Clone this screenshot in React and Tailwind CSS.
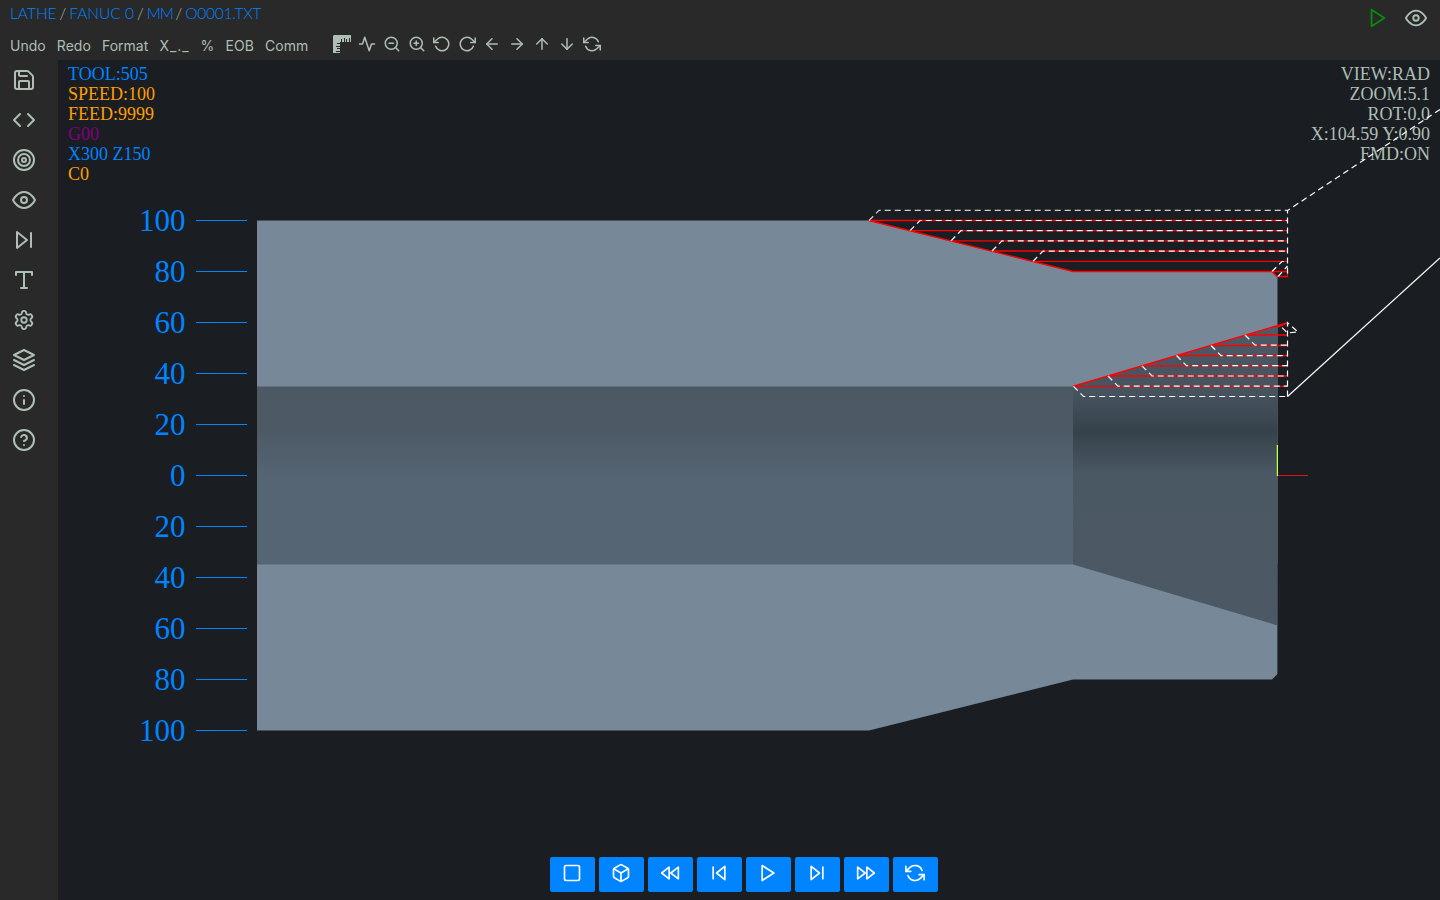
import { FiCode, FiTarget, FiEye, FiSkipForward, FiType, FiLayers, FiInfo, FiHelpCircle, FiActivity, FiZoomOut, FiZoomIn, FiRotateCcw, FiRotateCw, FiArrowLeft, FiArrowRight, FiArrowUp, FiArrowDown, FiRefreshCcw, FiPlay, FiSquare, FiBox, FiRewind, FiSkipBack, FiFastForward } from "react-icons/fi";
import { Save, Settings } from "lucide-react";

function Ruler() {
  return (
    <svg width="18" height="18" viewBox="0 0 18 18" fill="currentColor">
      <path d="M1 0H18V7H17V3H16V7H14V4H13V7H12V3H11V7H9V4H8V7H7V8H4V9H7V11H3V12H7V13H4V14H7V16H3V17H7V18H0V1Z" />
    </svg>
  );
}

const side = [Save, FiCode, FiTarget, FiEye, FiSkipForward, FiType, Settings, FiLayers, FiInfo, FiHelpCircle];
const tools = [Ruler, FiActivity, FiZoomOut, FiZoomIn, FiRotateCcw, FiRotateCw, FiArrowLeft, FiArrowRight, FiArrowUp, FiArrowDown, FiRefreshCcw];
const player = [FiSquare, FiBox, FiRewind, FiSkipBack, FiPlay, FiSkipForward, FiFastForward, FiRefreshCcw];
const menu = [
  { label: "Undo" },
  { label: "Redo" },
  { label: "Format" },
  { label: "X_._", className: "tracking-[0.9px]" },
  { label: "%" },
  { label: "EOB" },
  { label: "Comm" },
];
const path = [
  { label: "LATHE" },
  { label: "FANUC 0" },
  { label: "MM", className: "tracking-[-1.1px]" },
  { label: "O0001.TXT", className: "tracking-[-0.25px]" },
];
const marks = [100, 80, 60, 40, 20, 0, 20, 40, 60, 80, 100];

// Outer roughing passes: start x and y of each cut
const outer = [[869, 220.5], [910, 230.7], [951, 240.8], [992, 251], [1033, 261.3]];
// Bore roughing passes
const inner = [[1073.5, 386.3], [1108, 376], [1142, 365.8], [1176.5, 355.5], [1211, 345.5], [1245, 335]];

function Viewport() {
  return (
    <svg className="relative block h-full w-full" viewBox="58 60 1382 840">
      <defs>
        <linearGradient id="bore" x1="0" y1="386" x2="0" y2="565" gradientUnits="userSpaceOnUse">
          <stop offset="0" stopColor="#4c5965" />
          <stop offset="0.25" stopColor="#4d5a66" />
          <stop offset="0.52" stopColor="#566574" />
          <stop offset="1" stopColor="#566574" />
        </linearGradient>
        <linearGradient id="cone" x1="0" y1="323" x2="0" y2="625" gradientUnits="userSpaceOnUse">
          <stop offset="0" stopColor="#4e5b68" />
          <stop offset="0.24" stopColor="#46535e" />
          <stop offset="0.36" stopColor="#36424b" />
          <stop offset="0.5" stopColor="#4a5864" />
          <stop offset="1" stopColor="#4c5965" />
        </linearGradient>
      </defs>
      <g fill="#0084ff" fontFamily="Liberation Serif, serif" fontSize="31" textAnchor="end">
        {marks.map((m, i) => (
          <g key={i}>
            <text x="185.6" y={230.7 + i * 51}>{m}</text>
            <rect x="196" y={220 + i * 51} width="51" height="1" />
          </g>
        ))}
      </g>
      <path d="M257 220.5H869L1073 271.5H1272L1277.5 277V674L1272 679.5H1073L869 730.5H257Z" fill="#778899" />
      <path d="M257 386.5H1073.5V564.5H257Z" fill="url(#bore)" />
      <path d="M1073 386.5L1277.5 326V625.5L1073 564.5Z" fill="url(#cone)" />
      <path d="M1277.5 564V674" stroke="#3b4750" />
      <g stroke="#f00" strokeWidth="1.3" fill="none">
        {outer.map(([x, y]) => <path key={y} d={`M${x} ${y}H1287.5`} />)}
        {inner.map(([x, y]) => <path key={y} d={`M${x} ${y}H1287.5`} />)}
        <path d="M869 220.5L1073 271.5H1287.5V276.5H1277L1272 271.5" />
        <path d="M1073.5 386.3L1287.5 322.7L1278 327" strokeWidth="1.5" />
      </g>
      <g stroke="#fff" strokeWidth="1.2" fill="none" strokeDasharray="6 4">
        <path d="M1440 109.5L1287.5 210.5V276.5" />
        {outer.map(([x, y]) => <path key={y} d={`M${x} ${y}L${x + 10} ${y - 10.2}H1287.5`} opacity={y < 221 ? 0.8 : 1} />)}
        <path d="M1272 271.5L1282 261.5H1287.5M1278 276.5L1287.5 266" />
        {inner.map(([x, y]) => <path key={y} d={`M${x} ${y}L${x + 10} ${y + 10.2}H1287.5`} />)}
        <path d="M1287.5 396.5V322.7L1298 332L1287.5 333L1279.5 325" />
      </g>
      <path d="M1287.5 396.5L1440 258" stroke="#fff" strokeWidth="1.2" />
      <path d="M1278 475.5H1308" stroke="#e01414" />
      <path d="M1276.5 445V476" stroke="#448573" />
      <path d="M1277.5 445V476" stroke="#d9ff20" />
    </svg>
  );
}

export default function App() {
  return (
    <div className="flex h-[900px] w-[1440px] flex-col overflow-hidden bg-[#292929] text-[#adbfb5]">
      <header className="flex h-[60px] shrink-0 justify-between">
        <div className="flex flex-col pl-[10px]">
          <div className="flex h-7 items-center pb-[2px] font-[Lato] text-[15.5px] font-light leading-[26px]">
            {path.map((p, i) => (
              <span key={p.label} className="flex">
                {i > 0 && <span className="w-[12.7px] text-center">/</span>}
                <span className={`text-[#0084ff] ${p.className ?? ""}`}>{p.label}</span>
              </span>
            ))}
          </div>
          <div className="flex h-8 items-center">
            <div className="flex w-[323px] gap-[11.2px] pt-1 font-[Inter] text-[14px] leading-8">
              {menu.map((m) => <span key={m.label} className={m.className}>{m.label}</span>)}
            </div>
            <div className="-ml-[3.5px] flex">
              {tools.map((Icon, i) => (
                <span key={i} className="flex w-[25px] justify-center"><Icon size={18} /></span>
              ))}
            </div>
          </div>
        </div>
        <div className="flex gap-4 pr-[13px] pt-[7px]">
          <FiPlay size={22} color="#078a0d" />
          <FiEye size={22} />
        </div>
      </header>
      <div className="flex min-h-0 flex-1">
        <nav className="flex w-[58px] shrink-0 flex-col gap-4 pl-3 pt-2">
          {side.map((Icon, i) => (
            <span key={i} className="flex size-6 items-center justify-center"><Icon size={Icon === Settings ? 22 : 24} /></span>
          ))}
        </nav>
        <main className="relative min-w-0 flex-1 bg-[#1a1d21]">
          <div className="absolute inset-x-[10px] top-1 flex justify-between font-['Liberation_Serif',serif] text-[18px] leading-5">
            <div className="text-[#0084ff]">
              <div>TOOL:505</div>
              <div className="text-[#ff9d00]">SPEED:100</div>
              <div className="text-[#ff9d00]">FEED:9999</div>
              <div className="text-[#800080]">G00</div>
              <div>X300 Z150</div>
              <div className="text-[#ff9d00]">C0</div>
            </div>
            <div className="text-right">
              <div>VIEW:RAD</div>
              <div>ZOOM:5.1</div>
              <div>ROT:0.0</div>
              <div>X:104.59 Y:0.90</div>
              <div>FMD:ON</div>
            </div>
          </div>
          <Viewport />
          <div className="absolute bottom-2 left-[492px] flex gap-1 text-white">
            {player.map((Icon, i) => (
              <button key={i} className="flex h-[35px] w-[45px] items-center justify-center rounded-[2px] bg-[#0084ff] pb-[3px] pr-[2px]"><Icon size={20} /></button>
            ))}
          </div>
        </main>
      </div>
    </div>
  );
}
